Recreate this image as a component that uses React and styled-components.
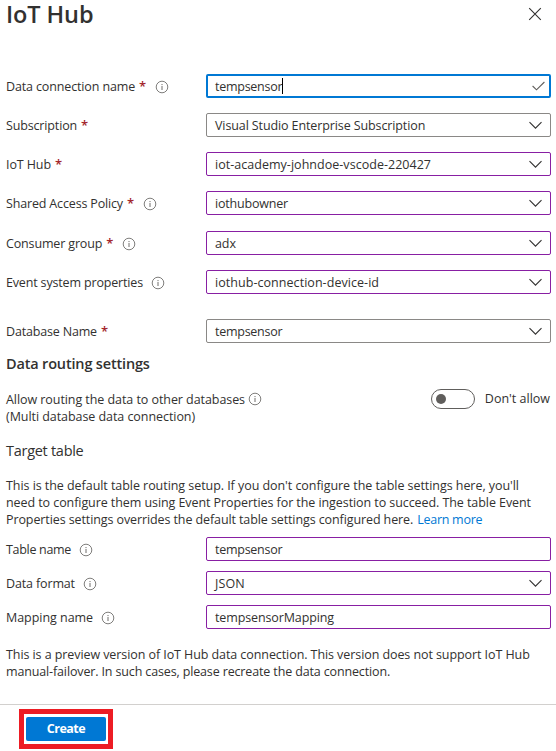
import React from "react";
import styled, { createGlobalStyle } from "styled-components";

const GlobalStyle = createGlobalStyle`
  * { box-sizing: border-box; }
  body {
    margin: 0;
    background: #fff;
    color: #323130;
    font: 12.5px/17px "Open Sans", "Noto Sans", sans-serif;
    overflow: hidden;
  }
`;

const Blade = styled.main`
  display: flex;
  flex-direction: column;
  width: 556px;
  height: 751px;
`;

const Header = styled.header`
  display: flex;
  justify-content: space-between;
  align-items: flex-start;
  height: 74px;
  padding: 0 14px 0 6px;
`;

const Title = styled.h1`
  margin: 0;
  font-size: 23.5px;
  font-weight: 600;
  line-height: 28px;
  letter-spacing: -0.1px;
`;

const CloseButton = styled.button`
  display: flex;
  padding: 0;
  margin-top: 7px;
  border: 0;
  background: none;
  color: #323130;
`;

const Form = styled.div`
  display: flex;
  flex-direction: column;
  padding: 0 5px 0 6px;
`;

const FieldRow = styled.div`
  display: grid;
  grid-template-columns: 200px 345px;
  height: 24px;
  margin-bottom: ${(p) => p.$gap}px;
`;

const Label = styled.label`
  display: flex;
  align-items: center;
  white-space: nowrap;
`;

const Text = styled.span`
  letter-spacing: ${(p) => p.$track || 0}px;
  white-space: nowrap;
`;

const Required = styled.span`
  width: 7px;
  margin-left: 4px;
  color: #a4262c;
  font-size: 13px;
  font-weight: 600;
`;

const InfoIcon = styled.svg`
  display: block;
  flex: none;
  width: 14px;
  height: 14px;
  margin-left: ${(p) => p.$gap}px;
  margin-top: ${(p) => p.$drop}px;
`;

const borders = { focus: "#0078d4", idle: "#8a8886", edited: "#881fa3" };

const Control = styled.div`
  display: flex;
  align-items: center;
  justify-content: space-between;
  height: 24px;
  padding: 0 ${(p) => (p.$tone === "focus" ? 4 : 8)}px 0 ${(p) => (p.$tone === "focus" ? 7 : 8)}px;
  border: ${(p) => (p.$tone === "focus" ? 2 : 1)}px solid ${(p) => borders[p.$tone]};
  border-radius: 2px;
`;

const Value = styled.span`
  display: flex;
  align-items: center;
`;

const Caret = styled.span`
  width: 1px;
  height: 16px;
  background: #000;
`;

const SectionTitle = styled.h2`
  margin: 0;
  height: 24px;
  font-size: 14.5px;
  line-height: 26px;
  font-weight: ${(p) => p.$weight};
  letter-spacing: ${(p) => p.$track}px;
`;

const RoutingRow = styled.div`
  display: flex;
  justify-content: space-between;
  height: 63px;
  padding: 16px 1px 0 0;
`;

const Lines = styled.div`
  display: flex;
  flex-direction: column;
`;

const Line = styled.div`
  display: flex;
  height: 17px;
  align-items: center;
`;

const ToggleGroup = styled.div`
  display: flex;
  align-items: center;
  gap: 10px;
  height: 20px;
  margin-top: -2px;
`;

const Toggle = styled.button`
  display: flex;
  align-items: center;
  width: 44px;
  height: 20px;
  padding: 0 4px;
  border: 1px solid #605e5c;
  border-radius: 10px;
  background: #fff;
`;

const Knob = styled.span`
  width: 10px;
  height: 10px;
  border-radius: 50%;
  background: #605e5c;
`;

const ToggleText = styled(Text)`
  line-height: 17px;
  margin-bottom: 1px;
`;

const Paragraph = styled(Lines)`
  margin: ${(p) => p.$margin};
`;

const Link = styled.a`
  margin-left: 4px;
  color: #0078d4;
  letter-spacing: -0.27px;
`;

const Footer = styled.footer`
  display: flex;
  align-items: flex-start;
  height: 47px;
  margin-top: auto;
  padding: 4px 19px 0;
  border-top: 1px solid #d2d0ce;
`;

const Highlight = styled.div`
  padding: 3px 2px;
  border: 5px solid #ed1c24;
`;

const CreateButton = styled.button`
  display: block;
  width: 80px;
  height: 24px;
  padding: 0 0 1px;
  border: 0;
  border-radius: 2px;
  background: #0078d4;
  color: #fff;
  font: 700 12.5px/23px "Open Sans", "Noto Sans", sans-serif;
  letter-spacing: -0.5px;
`;

function Info({ gap = 9, drop = 1 }) {
  return (
    <InfoIcon $gap={gap} $drop={drop} viewBox="0 0 14 14" fill="none">
      <circle cx="7" cy="7" r="5.8" stroke="#716f6d" strokeWidth="0.9" />
      <path d="M7 6v4M7 4v1.1" stroke="#716f6d" strokeWidth="1" />
    </InfoIcon>
  );
}

function Chevron() {
  return (
    <svg width="13" height="9" viewBox="0 0 13 9" fill="none">
      <path d="M.5 1.2 6.5 7.2l6-6" stroke="#323130" strokeWidth="1.1" />
    </svg>
  );
}

function Check() {
  return (
    <svg width="13" height="10" viewBox="0 0 13 10" fill="none">
      <path d="M.6 5 4.5 8.8 12.4 1" stroke="#605e5c" strokeWidth="1.1" />
    </svg>
  );
}

function Field({ label, track, required, info, value, valueTrack, tone = "edited", select = true, gap }) {
  return (
    <FieldRow $gap={gap}>
      <Label>
        <Text $track={track}>{label}</Text>
        {required && <Required>*</Required>}
        {info && <Info gap={required ? 9 : 8} />}
      </Label>
      <Control $tone={tone}>
        <Value>
          <Text $track={valueTrack}>{value}</Text>
          {tone === "focus" && <Caret />}
        </Value>
        {tone === "focus" ? <Check /> : select && <Chevron />}
      </Control>
    </FieldRow>
  );
}

const connectionFields = [
  { label: "Data connection name", track: -0.135, required: true, info: true, value: "tempsensor", valueTrack: -0.26, tone: "focus", gap: 15 },
  { label: "Subscription", track: -0.15, required: true, value: "Visual Studio Enterprise Subscription", valueTrack: -0.11, tone: "idle", gap: 15 },
  { label: "IoT Hub", track: -0.1, required: true, value: "iot-academy-johndoe-vscode-220427", valueTrack: 0.03, gap: 15 },
  { label: "Shared Access Policy", track: -0.16, required: true, info: true, value: "iothubowner", valueTrack: -0.19, gap: 16 },
  { label: "Consumer group", track: -0.15, required: true, info: true, value: "adx", valueTrack: -0.1, gap: 15 },
  { label: "Event system properties", track: -0.16, info: true, value: "iothub-connection-device-id", valueTrack: 0.05, gap: 25 },
  { label: "Database Name", track: -0.17, required: true, value: "tempsensor", valueTrack: -0.26, tone: "idle", gap: 8 },
];

const tableFields = [
  { label: "Table name", track: -0.31, info: true, value: "tempsensor", valueTrack: -0.26, select: false, gap: 10 },
  { label: "Data format", track: -0.14, info: true, value: "JSON", valueTrack: 0.1, gap: 10 },
  { label: "Mapping name", track: -0.04, info: true, value: "tempsensorMapping", valueTrack: -0.12, select: false, gap: 0 },
];

export default function App() {
  return (
    <Blade>
      <GlobalStyle />
      <Header>
        <Title>IoT Hub</Title>
        <CloseButton aria-label="Close">
          <svg width="14" height="14" viewBox="0 0 14 14" fill="none">
            <path d="M1.2 1.2l11.6 11.6M12.8 1.2 1.2 12.8" stroke="#323130" strokeWidth="1.1" />
          </svg>
        </CloseButton>
      </Header>
      <Form>
        {connectionFields.map((f) => <Field key={f.label} {...f} />)}
        <SectionTitle $weight={600} $track={-0.17}>Data routing settings</SectionTitle>
        <RoutingRow>
          <Lines>
            <Line>
              <Text $track={-0.065}>Allow routing the data to other databases</Text>
              <Info gap={3} drop={-1} />
            </Line>
            <Line><Text $track={-0.06}>(Multi database data connection)</Text></Line>
          </Lines>
          <ToggleGroup>
            <Toggle role="switch" aria-checked="false" aria-label="Allow routing"><Knob /></Toggle>
            <ToggleText>Don't allow</ToggleText>
          </ToggleGroup>
        </RoutingRow>
        <SectionTitle $weight={400} $track={-0.28}>Target table</SectionTitle>
        <Paragraph $margin="15px 0 9px">
          <Line><Text $track={-0.053}>This is the default table routing setup. If you don't configure the table settings here, you'll</Text></Line>
          <Line><Text $track={-0.074}>need to configure them using Event Properties for the ingestion to succeed. The table Event</Text></Line>
          <Line>
            <Text $track={-0.1}>Properties settings overrides the default table settings configured here.</Text>
            <Link>Learn more</Link>
          </Line>
        </Paragraph>
        {tableFields.map((f) => <Field key={f.label} {...f} />)}
        <Paragraph $margin="17px 0 0">
          <Line><Text $track={-0.078}>This is a preview version of IoT Hub data connection. This version does not support IoT Hub</Text></Line>
          <Line><Text $track={-0.14}>manual-failover. In such cases, please recreate the data connection.</Text></Line>
        </Paragraph>
      </Form>
      <Footer>
        <Highlight><CreateButton>Create</CreateButton></Highlight>
      </Footer>
    </Blade>
  );
}
